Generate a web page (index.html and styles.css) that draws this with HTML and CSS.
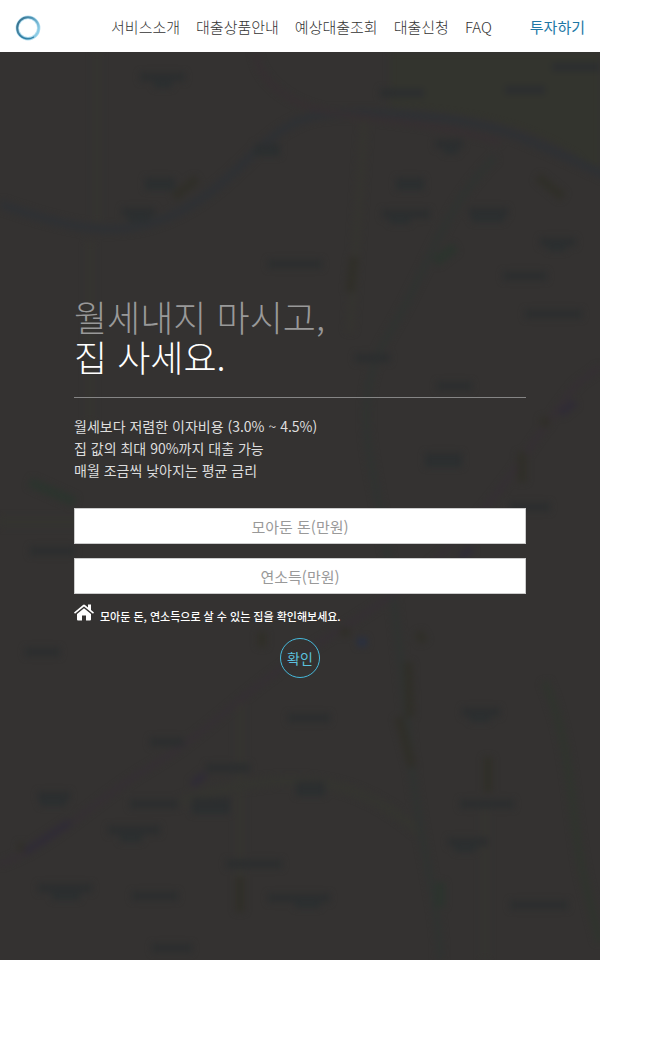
FILE: index.html
```html
<!DOCTYPE html>
<html lang="ko">
<head>
<meta charset="utf-8">
<meta name="viewport" content="width=device-width, initial-scale=1">
<title>월세내지 마시고, 집 사세요.</title>
<link rel="stylesheet" href="styles.css">
</head>
<body>
<header class="header">
  <a class="brand" href="#" aria-label="홈">
    <svg class="brand-logo" viewBox="0 0 26 26" aria-hidden="true">
      <defs>
        <linearGradient id="ring" x1="0" y1="0.2" x2="1" y2="0.7">
          <stop offset="0" stop-color="#36708c"/>
          <stop offset="0.45" stop-color="#4d91b2"/>
          <stop offset="1" stop-color="#8fd0ea"/>
        </linearGradient>
      </defs>
      <circle cx="13" cy="13" r="10.7" fill="none" stroke="#b5dff0" stroke-width="3.4"/>
      <circle cx="13" cy="13" r="10.8" fill="none" stroke="url(#ring)" stroke-width="2"/>
      <path d="M4 19.5A11 11 0 0 0 19 22" fill="none" stroke="#28799f" stroke-width="1"/>
    </svg>
  </a>
  <nav class="nav">
    <a href="#">서비스소개</a>
    <a href="#">대출상품안내</a>
    <a href="#">예상대출조회</a>
    <a href="#">대출신청</a>
    <a href="#">FAQ</a>
  </nav>
  <a class="invest" href="#">투자하기</a>
</header>
<main class="hero">
  <svg class="map" viewBox="0 0 600 908" preserveAspectRatio="xMidYMid slice" aria-hidden="true">
    <defs>
      <filter id="soft" x="-10%" y="-10%" width="120%" height="120%" color-interpolation-filters="sRGB"><feGaussianBlur stdDeviation="3"/></filter>
    </defs>
    <g filter="url(#soft)" fill="none">
      <path d="M390 0H600V120C550 80 490 60 390 55Z" fill="#33342e"/>
      <path d="M97 0V170M90 190V370M240 650V850M485 750V908M365 60L350 280" stroke="#353430" stroke-width="8"/>
      <path d="M0 470H200M180 750C300 710 360 730 420 780" stroke="#343430" stroke-width="10"/>
      <path d="M0 152C80 180 130 190 190 154S270 65 330 62S470 65 520 85S575 110 610 125" stroke="#2f3134" stroke-width="9"/>
      <path d="M255 0C260 30 290 55 340 62S440 72 500 90" stroke="#362f32" stroke-width="5"/>
      <path d="M495 105C440 160 430 215 390 280S370 400 382 470S400 600 410 700S440 850 440 908" stroke="#303331" stroke-width="7"/>
      <path d="M0 812C60 790 90 750 150 715S240 640 320 590S450 510 520 410S570 340 600 315" stroke="#352f34" stroke-width="5"/>
      <path d="M25 800L70 770M192 733L205 722M460 506L472 496M560 362L575 350" stroke="#302c36" stroke-width="8"/>
      <path d="M545 630C575 700 570 770 585 830L600 890" stroke="#30342e" stroke-width="8"/>
      <path d="M30 430L75 450M455 195L435 210M440 830V855" stroke="#2c342e" stroke-width="10"/>
      <path d="M174 145L197 127M354 205L350 240M538 125L563 145M522 400V430M399 665L412 715M488 705V740M240 825V860M408 610L410 665M262 580V595M340 580H350M418 580L424 590M545 365V375M18 795H24" stroke="#302f29" stroke-width="9"/>
      <path d="M140 25H185M145 130H175M254 96H280M122 160H155M268 212H322M380 41H424M505 38H545M435 92H463M396 130H424M382 162H430M469 160H508M540 190H576M503 224H547M525 262H582M437 334H472M355 306H390M425 405H462M30 499H75M510 455H550M25 600H60M150 690H184M206 716H250M38 744H70M130 752H178M192 750H230M108 778H160M226 812H282M38 836H92M132 844H178M268 846H330M152 896H192M288 666H330M296 734H325M462 660H500M460 752H514M448 790H488M510 853H568M552 15H600" stroke="#2c2e2f" stroke-width="9"/>
      <path d="M154 32H172M254 100H280M145 134H175M128 166H150M390 168H410M396 134H424M548 195H566M444 98H458M425 411H462M52 844H80M120 786H142M192 758H230M40 750H66M295 852H320M296 740H325M455 796H476M470 666H490M472 166H504" stroke="#2b2f30" stroke-width="8"/>
      <path d="M357 590H367" stroke="#2a3040" stroke-width="9"/>
    </g>
  </svg>
  <div class="content">
    <h1 class="title">
      <span class="title-line muted">월세내지 마시고,</span>
      <span class="title-line">집 사세요.</span>
    </h1>
    <p class="lead">월세보다 저렴한 이자비용 (3.0% ~ 4.5%)<br>집 값의 최대 90%까지 대출 가능<br>매월 조금씩 낮아지는 평균 금리</p>
    <form class="form">
      <input class="field" type="text" placeholder="모아둔 돈(만원)" aria-label="모아둔 돈(만원)">
      <input class="field" type="text" placeholder="연소득(만원)" aria-label="연소득(만원)">
      <p class="hint">
        <svg class="home" viewBox="0 0 20 17" aria-hidden="true">
          <path fill="#fff" d="M10 4.2 17 10V15.5Q17 16.5 16 16.5H12V11.5H8V16.5H4Q3 16.5 3 15.5V10Z"/>
          <path fill="#fff" d="M0 8.6 9 .9Q10 .1 11 .9L14 3.4V.6H17V6L20 8.6 19 9.8 10 2.4 1 9.8Z"/>
        </svg>
        <span>모아둔 돈, 연소득으로 살 수 있는 집을 확인해보세요.</span>
      </p>
      <button class="submit" type="button">확인</button>
    </form>
  </div>
</main>
</body>
</html>
```
FILE: styles.css
```css
* {
  box-sizing: border-box;
}

body {
  display: flex;
  flex-direction: column;
  min-height: 100vh;
  margin: 0;
  padding: 0 60px 96px 0;
  background: #fff;
  font-family: "Noto Sans CJK KR", sans-serif;
  font-size: 15px;
}

a {
  color: inherit;
  text-decoration: none;
}

.header {
  display: flex;
  align-items: center;
  height: 52px;
  padding: 0 15px;
  color: #333;
  font-weight: 300;
  white-space: nowrap;
}

.brand {
  display: flex;
  padding-top: 4px;
}

.brand-logo {
  width: 26px;
  height: 26px;
}

.nav {
  display: flex;
  gap: 16px;
  margin-left: auto;
}

.invest {
  margin-left: 38px;
  color: #2077a5;
  font-weight: 400;
}

.hero {
  position: relative;
  flex: 1;
  padding: 244px 74px 80px;
  overflow: hidden;
  background: #343231;
  color: #fff;
}

.map {
  position: absolute;
  inset: 0;
  width: 100%;
  height: 100%;
}

.content {
  position: relative;
}

.title {
  margin: 0;
  padding-bottom: 21px;
  border-bottom: 1px solid #858585;
  font-size: 36px;
  font-weight: 300;
  line-height: 40px;
}

.title-line {
  display: block;
}

.muted {
  color: #999;
}

.lead {
  margin: 17px 0 27px;
  color: #ddd;
  font-size: 14px;
  line-height: 22px;
}

.form {
  display: flex;
  flex-direction: column;
}

.field {
  width: 100%;
  height: 36px;
  margin: 0;
  padding: 0 12px;
  border: 1px solid #ccc;
  border-radius: 0;
  background: #fff;
  color: #555;
  font: inherit;
  text-align: center;
}

.field + .field {
  margin-top: 14px;
}

.field::placeholder {
  color: #999;
  opacity: 1;
}

.hint {
  display: flex;
  align-items: flex-start;
  gap: 6px;
  margin: 10px 0 14px;
  font-size: 11px;
  font-weight: 500;
  line-height: 16px;
}

.hint span {
  padding-top: 4px;
}

.home {
  flex: none;
  width: 20px;
  height: 17px;
}

.submit {
  align-self: center;
  width: 40px;
  height: 40px;
  padding: 0;
  border: 1px solid #46b8da;
  border-radius: 50%;
  background: transparent;
  color: #5bc0de;
  font: inherit;
  font-size: 14px;
}
```
